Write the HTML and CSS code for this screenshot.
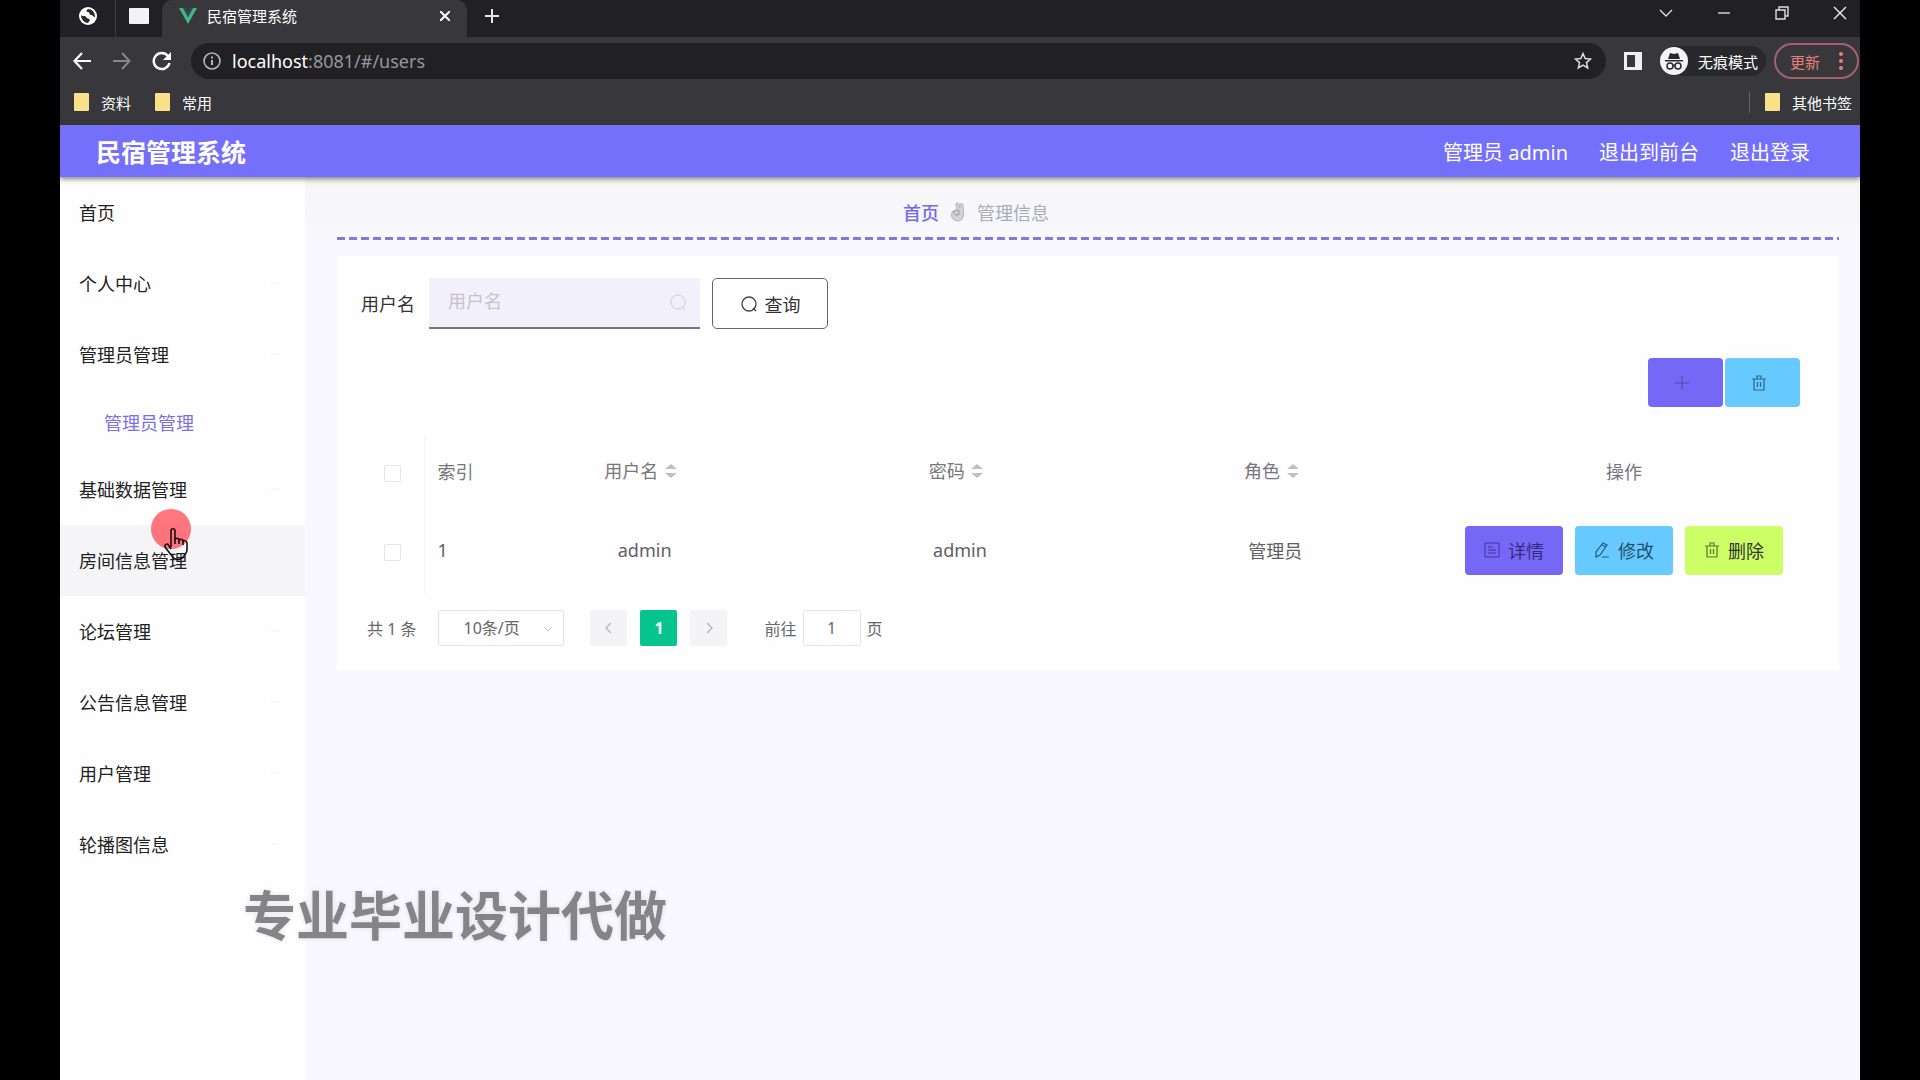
FILE: index.html
```html
<!DOCTYPE html>
<html lang="zh-CN">
<head>
    <meta charset="UTF-8">
    <title>民宿管理系统</title>
    <link rel="stylesheet" href="styles.css">
</head>
<body>
    <div class="window">
        <div class="tab-strip">
            <button class="pinned-tab" aria-label="Chrome">
                <svg width="18" height="18" viewBox="0 0 18 18"><circle cx="9" cy="9" r="9" fill="#fff"/><path d="M2 8c2 2 4 0 5 2s3 1 4 3l-2 3c-4 0-7-4-7-8zM9 2c-2 1-2 3 0 3s1 3 3 3 2 2 4 2c0-5-3-8-7-8z" fill="#2a292d"/></svg>
            </button>
            <button class="pinned-tab" aria-label="窗口">
                <svg width="20" height="16" viewBox="0 0 20 16"><rect width="20" height="16" rx="1" fill="#f4f4f4"/></svg>
            </button>
            <div class="active-tab">
                <svg width="18" height="16" viewBox="0 0 18 16"><path d="M0 0h4l5 9 5-9h4L9 16z" fill="#41b883"/><path d="M4 0h3l2 4 2-4h3L9 9z" fill="#35495e"/></svg>
                <span class="tab-title">民宿管理系统</span>
                <button class="icon-btn small" aria-label="关闭标签页">
                    <svg width="10" height="10" viewBox="0 0 10 10"><path d="M0 0l10 10M10 0L0 10" stroke="#fff" stroke-width="2"/></svg>
                </button>
            </div>
            <button class="icon-btn new-tab" aria-label="新标签页">
                <svg width="16" height="16" viewBox="0 0 16 16"><path d="M8 1v14M1 8h14" stroke="#e4e4e4" stroke-width="2"/></svg>
            </button>
            <div class="window-controls">
                <button class="icon-btn" aria-label="搜索标签页"><svg width="14" height="14" viewBox="0 0 14 14"><path d="M1 4l6 6 6-6" fill="none" stroke="#ddd" stroke-width="1.4"/></svg></button>
                <button class="icon-btn" aria-label="最小化"><svg width="14" height="14" viewBox="0 0 14 14"><path d="M1 7h12" stroke="#ddd" stroke-width="1.4"/></svg></button>
                <button class="icon-btn" aria-label="还原"><svg width="14" height="14" viewBox="0 0 14 14"><path d="M1 4h9v9H1zM4 4V1h9v9h-3" fill="none" stroke="#ddd" stroke-width="1.4"/></svg></button>
                <button class="icon-btn" aria-label="关闭"><svg width="14" height="14" viewBox="0 0 14 14"><path d="M1 1l12 12M13 1L1 13" stroke="#eee" stroke-width="1.4"/></svg></button>
            </div>
        </div>

        <div class="toolbar">
            <button class="icon-btn" aria-label="后退"><svg width="18" height="18" viewBox="0 0 18 18"><path d="M18 9H2M9 1L1.5 9 9 17" fill="none" stroke="#fff" stroke-width="2.2"/></svg></button>
            <button class="icon-btn" aria-label="前进"><svg width="18" height="18" viewBox="0 0 18 18"><path d="M0 9h16M9 1l7.5 8L9 17" fill="none" stroke="#87868a" stroke-width="2"/></svg></button>
            <button class="icon-btn" aria-label="刷新"><svg width="20" height="20" viewBox="0 0 20 20"><path d="M16 5a8 8 0 1 0 1.5 7" fill="none" stroke="#fff" stroke-width="2.4"/><path d="M19 1v8h-8z" fill="#fff"/></svg></button>
            <div class="address-bar">
                <svg width="18" height="18" viewBox="0 0 18 18"><circle cx="9" cy="9" r="8" fill="none" stroke="#b5b4b8" stroke-width="1.6"/><path d="M9 8v5M9 4.5v2" stroke="#b5b4b8" stroke-width="2"/></svg>
                <span class="url"><span class="host">localhost</span>:8081/#/users</span>
                <svg width="18" height="18" viewBox="0 0 18 18"><path d="M9 1.5l2.2 5 5.3.5-4 3.6 1.2 5.4L9 13.2 4.3 16l1.2-5.4-4-3.6 5.3-.5z" fill="none" stroke="#ddd" stroke-width="1.5"/></svg>
            </div>
            <button class="icon-btn side-panel" aria-label="侧边栏"><svg width="18" height="18" viewBox="0 0 18 18"><path d="M0 0h18v18H0zM3 3v12h8V3z" fill="#f0f0f4" fill-rule="evenodd"/></svg></button>
            <div class="incognito">
                <svg width="28" height="28" viewBox="0 0 28 28"><circle cx="14" cy="14" r="14" fill="#f4f4f8"/><path d="M10 6l4 1 4-1 2 6H8zM5 13h18v1.5H5z" fill="#29282d"/><g fill="none" stroke="#29282d" stroke-width="1.5"><circle cx="10" cy="19" r="3"/><circle cx="18" cy="19" r="3"/><path d="M13 18.5h2"/></g></svg>
                <span>无痕模式</span>
            </div>
            <button class="update-btn">更新
                <svg width="4" height="18" viewBox="0 0 4 18"><g fill="#e98078"><circle cx="2" cy="2" r="2"/><circle cx="2" cy="9" r="2"/><circle cx="2" cy="16" r="2"/></g></svg>
            </button>
        </div>

        <div class="bookmarks">
            <a class="bookmark" href="#"><span class="folder"></span>资料</a>
            <a class="bookmark" href="#"><span class="folder"></span>常用</a>
            <a class="bookmark other" href="#"><span class="folder"></span>其他书签</a>
        </div>

        <header class="navbar">
            <h1>民宿管理系统</h1>
            <nav class="nav-links">
                <span>管理员 admin</span>
                <a href="#">退出到前台</a>
                <a href="#">退出登录</a>
            </nav>
        </header>

        <div class="layout">
            <aside class="sidebar">
                <ul class="menu">
                    <li><a href="#">首页</a></li>
                    <li class="has-sub"><a href="#">个人中心</a></li>
                    <li class="has-sub"><a href="#">管理员管理</a>
                        <ul class="submenu">
                            <li><a href="#/users">管理员管理</a></li>
                        </ul>
                    </li>
                    <li class="has-sub"><a href="#">基础数据管理</a></li>
                    <li class="hovered"><a href="#">房间信息管理</a></li>
                    <li class="has-sub"><a href="#">论坛管理</a></li>
                    <li class="has-sub"><a href="#">公告信息管理</a></li>
                    <li class="has-sub"><a href="#">用户管理</a></li>
                    <li class="has-sub"><a href="#">轮播图信息</a></li>
                </ul>
            </aside>

            <main class="main">
                <div class="breadcrumb">
                    <a href="#">首页</a>
                    <svg width="16" height="20" viewBox="0 0 16 20"><path d="M3 9c-2 2-2 6 0 8s7 3 9 0 2-8 1-10V3c0-2-3-2-3 0v3l-1-4C8 0 5 1 6 3l1 5z" fill="#d4d4d7" stroke="#b4b4b4"/><path d="M3 10l4-2 2 3-4 2zM6 14l4-2M9 7v4" fill="none" stroke="#a4a4a4"/></svg>
                    <span>管理信息</span>
                </div>

                <section class="card">
                    <form class="search-form">
                        <label for="username">用户名</label>
                        <div class="search-input">
                            <input type="text" id="username" name="username" placeholder="用户名">
                            <svg width="18" height="18" viewBox="0 0 18 18"><circle cx="9" cy="8" r="7" fill="none" stroke="#cfccdc"/><path d="M13 13l3 3" stroke="#cfccdc"/></svg>
                        </div>
                        <button type="button" class="query-btn">
                            <svg width="18" height="18" viewBox="0 0 18 18"><circle cx="9" cy="9" r="7" fill="none" stroke="#444" stroke-width="1.3"/><path d="M13 13l3 3" stroke="#444" stroke-width="1.3"/></svg>
                            查询
                        </button>
                    </form>

                    <div class="actions">
                        <button class="btn purple" aria-label="新增"><svg width="16" height="16" viewBox="0 0 16 16"><path d="M8 1v14M1 8h14" stroke="#5247a8"/></svg></button>
                        <button class="btn blue" aria-label="删除"><svg width="16" height="16" viewBox="0 0 16 16"><path d="M1 4h14M3 4v11h10V4M6 4V1h4v3M6.500 7v5M9.500 7v5" fill="none" stroke="#2b6383" stroke-width="1.2"/></svg></button>
                    </div>

                    <table class="table">
                        <colgroup>
                            <col class="col-check">
                            <col class="col-index">
                            <col>
                            <col>
                            <col>
                            <col class="col-ops">
                        </colgroup>
                        <thead>
                            <tr>
                                <th><input type="checkbox" aria-label="全选"></th>
                                <th class="index">索引</th>
                                <th class="sortable">用户名 <svg class="sort" width="12" height="14" viewBox="0 0 12 14"><path d="M6 0l6 5H0zM0 9h12l-6 5z" fill="#c0c0c4"/></svg></th>
                                <th class="sortable">密码 <svg class="sort" width="12" height="14" viewBox="0 0 12 14"><path d="M6 0l6 5H0zM0 9h12l-6 5z" fill="#c0c0c4"/></svg></th>
                                <th class="sortable">角色 <svg class="sort" width="12" height="14" viewBox="0 0 12 14"><path d="M6 0l6 5H0zM0 9h12l-6 5z" fill="#c0c0c4"/></svg></th>
                                <th>操作</th>
                            </tr>
                        </thead>
                        <tbody>
                            <tr>
                                <td><input type="checkbox" aria-label="选择"></td>
                                <td class="index">1</td>
                                <td>admin</td>
                                <td>admin</td>
                                <td>管理员</td>
                                <td>
                                    <div class="row-ops">
                                        <button class="btn purple"><svg width="16" height="16" viewBox="0 0 16 16"><path d="M1 1h14v14H1zM4 5h5M4 8h8M4 11h8" fill="none" stroke="#40379a"/></svg>详情</button>
                                        <button class="btn blue"><svg width="16" height="16" viewBox="0 0 16 16"><path d="M9 1l4 2-7 10-4 2V10zM8 3l4 2M8 15h7" fill="none" stroke="#24597c" stroke-width="1.2"/></svg>修改</button>
                                        <button class="btn green"><svg width="16" height="16" viewBox="0 0 16 16"><path d="M1 4h14M3 4v11h10V4M6 4V1h4v3M6.500 7v5M9.500 7v5" fill="none" stroke="#5b7331" stroke-width="1.2"/></svg>删除</button>
                                    </div>
                                </td>
                            </tr>
                        </tbody>
                    </table>

                    <div class="pagination">
                        <span>共 1 条</span>
                        <div class="page-size">
                            <select aria-label="每页条数">
                                <option>10条/页</option>
                            </select>
                            <svg width="10" height="10" viewBox="0 0 10 10"><path d="M1 3l4 4 4-4" fill="none" stroke="#c4c4ca"/></svg>
                        </div>
                        <div class="pager">
                            <button aria-label="上一页"><svg width="10" height="12" viewBox="0 0 10 12"><path d="M7 1L2 6l5 5" fill="none" stroke="#bbb" stroke-width="1.5"/></svg></button>
                            <button class="current">1</button>
                            <button aria-label="下一页"><svg width="10" height="12" viewBox="0 0 10 12"><path d="M3 1l5 5-5 5" fill="none" stroke="#bbb" stroke-width="1.5"/></svg></button>
                        </div>
                        <div class="jumper">
                            <label for="page">前往</label>
                            <input type="text" id="page" value="1">
                            <span>页</span>
                        </div>
                    </div>
                </section>
            </main>
        </div>

        <div class="watermark">专业毕业设计代做</div>
        <div class="pointer">
            <svg width="26" height="34" viewBox="0 0 26 34"><path d="M8 20V4c0-3 4-3 4 0v8c1-1 4-1 4 1 1-1 4-1 4 1 1-1 4 0 4 2v7c0 3-2 4-3 6-3 5-10 4-12 0L2 20c-1-3 3-4 4-1l2 3" fill="none" stroke="#1b1014" stroke-width="1.6"/><path d="M12 12v5M16 13v4M20 14v4" stroke="#1b1014" stroke-width="1.6"/></svg>
        </div>
    </div>
</body>
</html>
```
FILE: styles.css
```css
* {
    box-sizing: border-box;
}

body {
    margin: 0;
    background: #000;
    font-family: "Noto Sans", "Noto Sans CJK SC", sans-serif;
    font-size: 18px;
    color: #333;
}

a {
    color: inherit;
    text-decoration: none;
}

button, input, select {
    font-family: inherit;
    font-size: inherit;
    color: inherit;
}

button {
    border: none;
    background: none;
    padding: 0;
    cursor: pointer;
}

svg {
    display: block;
    flex-shrink: 0;
}

.window {
    position: relative;
    display: flex;
    flex-direction: column;
    min-height: 100vh;
    margin: 0 60px;
    background: #f8f8fe;
    overflow: hidden;
}

/* browser bar */
.tab-strip {
    display: flex;
    height: 37px;
    background: #212024;
    color: #fff;
}

.icon-btn, .pinned-tab {
    display: flex;
    align-items: center;
    justify-content: center;
}

.icon-btn {
    width: 40px;
    height: 40px;
}

.pinned-tab {
    width: 46px;
    padding-bottom: 5px;
}

.pinned-tab:first-child {
    width: 56px;
    border-right: 1px solid #3c3b40;
}

.active-tab {
    display: flex;
    align-items: center;
    gap: 10px;
    width: 305px;
    padding: 0 10px 6px 17px;
    border-radius: 10px 10px 0 0;
    background: #38373c;
    font-size: 15px;
}

.tab-title {
    flex: 1;
}

.icon-btn.small {
    width: 24px;
    height: 24px;
}

.icon-btn.new-tab {
    width: 50px;
    height: 32px;
}

.window-controls {
    display: flex;
    gap: 18px;
    height: 26px;
    margin-left: auto;
}

.window-controls .icon-btn {
    height: 26px;
}

.toolbar {
    display: flex;
    align-items: center;
    height: 48px;
    padding: 0 1px 0 2px;
    background: #38373c;
    color: #fff;
}

.address-bar {
    display: flex;
    align-items: center;
    gap: 11px;
    flex: 1;
    height: 36px;
    margin-left: 9px;
    padding: 0 14px 0 12px;
    border-radius: 18px;
    background: #212023;
}

.url {
    flex: 1;
    color: #98979b;
}

.host {
    color: #fff;
}

.icon-btn.side-panel {
    width: 54px;
}

.incognito {
    display: flex;
    align-items: center;
    gap: 10px;
    height: 30px;
    padding-right: 8px;
    border-radius: 15px;
    background: #29282d;
    font-size: 15px;
}

.update-btn {
    display: flex;
    align-items: center;
    gap: 19px;
    height: 36px;
    margin-left: 8px;
    padding: 0 14px;
    border: 2px solid #a5626a;
    border-radius: 18px;
    font-size: 15px;
    color: #e98078;
}

.bookmarks {
    display: flex;
    align-items: center;
    gap: 24px;
    height: 40px;
    padding: 0 8px 6px 14px;
    background: #38373c;
    color: #fff;
    font-size: 15px;
}

.bookmark {
    display: flex;
    align-items: center;
    gap: 12px;
}

.folder {
    width: 15px;
    height: 18px;
    border-radius: 1px;
    background: #fbe08a;
}

.bookmark.other {
    margin-left: auto;
    padding-left: 15px;
    border-left: 1px solid #66656a;
}

/* page header */
.navbar {
    position: relative;
    display: flex;
    align-items: center;
    justify-content: space-between;
    height: 52px;
    padding: 0 50px 0 36px;
    background: #7570fc;
    box-shadow: 0 2px 5px rgba(40, 50, 30, 0.6);
    color: #fff;
}

.navbar h1 {
    margin: 0;
    font-size: 25px;
}

.nav-links {
    display: flex;
    gap: 31px;
    font-size: 20px;
}

.layout {
    display: flex;
    flex: 1;
}

/* sidebar */
.sidebar {
    width: 245px;
    background: #fefefe;
}

.menu, .submenu {
    margin: 0;
    padding: 0;
    list-style: none;
}

.menu a {
    display: flex;
    align-items: center;
    justify-content: space-between;
    height: 71px;
    padding: 0 26px 1px 19px;
    color: #222;
}

.menu .has-sub > a::after {
    content: "";
    width: 8px;
    height: 2px;
    background: #f7f7fb;
}

.menu .submenu a {
    height: 64px;
    padding-left: 44px;
    color: #7b6fe6;
}

.menu .hovered a {
    background: #f5f5f8;
}

/* content */
.main {
    flex: 1;
    padding: 0 21px 0 32px;
    background: linear-gradient(#f6f6f5, #f8f8fe 60px);
}

.breadcrumb {
    display: flex;
    align-items: center;
    justify-content: center;
    gap: 11px;
    height: 63px;
    padding: 6px 224px 0 0;
    background: repeating-linear-gradient(90deg, #8377e0 0 8px, transparent 8px 12px) bottom / 100% 3px no-repeat;
    color: #a9abb5;
}

.breadcrumb a {
    color: #7367ef;
    font-weight: 500;
}

.card {
    margin-top: 16px;
    padding: 22px 24px 24px;
    background: #fefefe;
}

.search-form {
    display: flex;
    align-items: center;
    height: 51px;
}

.search-form label {
    margin-right: 14px;
    padding-bottom: 2px;
}

.search-input {
    position: relative;
    width: 271px;
    margin-right: 12px;
}

.search-input input {
    display: block;
    width: 100%;
    height: 51px;
    padding: 0 40px 3px 19px;
    border: none;
    border-bottom: 2px solid #77767c;
    background: #f2f0fb;
}

.search-input input::placeholder {
    color: #c6c3d0;
}

.search-input svg {
    position: absolute;
    top: 16px;
    right: 13px;
}

.query-btn {
    display: flex;
    align-items: center;
    justify-content: center;
    gap: 7px;
    width: 116px;
    height: 51px;
    border: 1px solid #66656b;
    border-radius: 5px;
    background: #fff;
}

.actions {
    display: flex;
    justify-content: flex-end;
    gap: 2px;
    margin: 29px 15px 0 0;
}

.btn {
    display: flex;
    align-items: center;
    justify-content: center;
    gap: 8px;
    height: 49px;
    border-radius: 4px;
}

.actions .btn {
    width: 75px;
    padding-right: 7px;
}

.purple {
    background: #7568f7;
}

.blue {
    background: #66caff;
}

.green {
    background: #ccff66;
}

.table {
    width: 100%;
    margin-top: 29px;
    border-collapse: collapse;
    table-layout: fixed;
    color: #606066;
}

.col-check, .col-index {
    width: 63px;
}

.col-ops {
    width: 382px;
}

.table th, .table td {
    padding: 0;
    font-weight: 400;
    text-align: center;
}

.table th {
    height: 70px;
    color: #77767c;
}

.table td {
    height: 88px;
}

.table .sortable {
    padding: 0 8px 3px 0;
}

.table .index {
    padding-left: 13px;
    border-left: 1px solid #f3f3fa;
    text-align: left;
}

.table input {
    appearance: none;
    width: 17px;
    height: 17px;
    margin: 0;
    border: 1px solid #e4e4ec;
    border-radius: 2px;
    background: #fff;
    vertical-align: middle;
}

.sort {
    display: inline-block;
    margin-left: 2px;
}

.row-ops {
    display: flex;
    justify-content: center;
    gap: 12px;
}

.row-ops .btn {
    width: 98px;
    color: #333;
}

.row-ops .purple {
    color: #352c7e;
}

.row-ops .blue {
    color: #234f6b;
}

/* pagination */
.pagination {
    display: flex;
    align-items: center;
    height: 36px;
    margin-top: 16px;
    padding-left: 6px;
    color: #66666c;
    font-size: 16px;
}

.page-size {
    position: relative;
    width: 126px;
    margin: 0 26px 0 22px;
}

.page-size select {
    appearance: none;
    width: 100%;
    height: 36px;
    padding: 0 24px;
    border: 1px solid #dfdfe8;
    border-radius: 3px;
    background: #fff;
}

.page-size svg {
    position: absolute;
    top: 14px;
    right: 11px;
}

.pager {
    display: flex;
    gap: 13px;
}

.pager button {
    display: flex;
    align-items: center;
    justify-content: center;
    width: 37px;
    height: 36px;
    border-radius: 2px;
    background: #f4f4f6;
}

.pager .current {
    background: #05c48e;
    color: #fff;
    font-weight: 700;
}

.jumper {
    display: flex;
    align-items: center;
    gap: 6px;
    margin-left: 37px;
}

.jumper input {
    width: 58px;
    height: 36px;
    border: 1px solid #e2e2ea;
    border-radius: 3px;
    text-align: center;
}

/* overlays */
.watermark {
    position: absolute;
    left: 183px;
    top: 880px;
    color: #858489;
    font-size: 53px;
    font-weight: 700;
    line-height: 72px;
    text-shadow: 0 0 2px #fff, 0 0 4px #d4d3da;
}

.pointer {
    position: absolute;
    left: 91px;
    top: 509px;
    width: 40px;
    height: 40px;
    padding: 18px 0 0 12px;
    border-radius: 50%;
    background: rgba(255, 84, 92, 0.8);
}
```
